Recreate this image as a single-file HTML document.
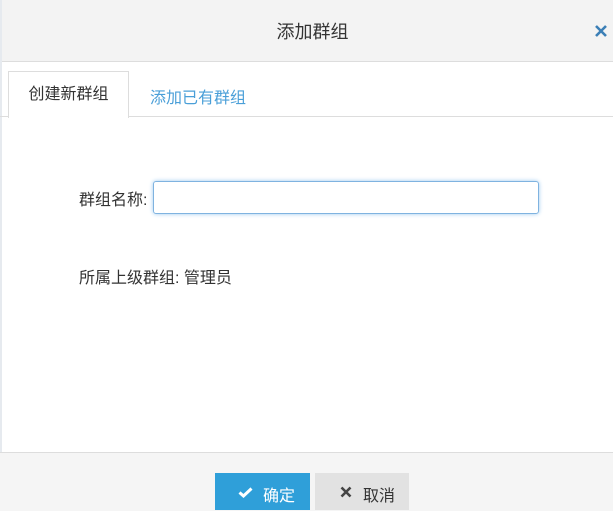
<!DOCTYPE html><html><head><meta charset="utf-8"><style>
body{margin:0;width:613px;height:510px;overflow:hidden;background:#fff;font-family:"Liberation Sans","Noto Sans CJK SC",sans-serif;position:relative;font-size:16px;color:#333}
.hd{position:absolute;left:0;top:0;width:613px;height:61px;background:#f3f3f3;border-bottom:1px solid #ddd}
.hd .t{position:absolute;left:0;right:0;top:18px;text-align:center;font-size:18px;color:#333;padding-left:12px}
.x{position:absolute;left:594px;top:24px}
.lb{position:absolute;left:0;top:0;width:2px;height:510px;background:#e6eaef}
.tabline{position:absolute;left:0;top:116px;width:613px;height:1px;background:#ddd}
.tab{position:absolute;left:8px;top:71px;width:119px;height:46px;border:1px solid #ddd;border-bottom:none;background:#fff;text-align:center;line-height:46px;font-size:16px}
.tab2{position:absolute;left:150px;top:84px;font-size:16px;color:#4a9fd8}
.l1{position:absolute;left:79px;top:186px}
.inp{position:absolute;left:153px;top:181px;width:384px;height:31px;border:1px solid #7fb3e0;border-radius:3px;box-shadow:0 0 4px #9cc8ee}
.l2{position:absolute;left:79px;top:264px}
.ft{position:absolute;left:0;top:452px;width:613px;height:58px;background:#f5f5f5;border-top:1px solid #ddd}
.b1{position:absolute;left:215px;top:473px;width:95px;height:37px;background:#2f9fd9;color:#fff;font-size:16px}
.b2{position:absolute;left:315px;top:473px;width:94px;height:37px;background:#e2e2e2;color:#333;font-size:16px}
.b1 span,.b2 span{position:absolute;top:9px}
</style></head><body>
<div class="hd"><div class="t">添加群组</div>
<svg class="x" width="14" height="14" viewBox="0 0 14 14"><path d="M2 2L12 12M12 2L2 12" stroke="#3b7fb6" stroke-width="2.6"/></svg></div>
<div class="lb"></div>
<div class="tabline"></div>
<div class="tab">创建新群组</div>
<div class="tab2">添加已有群组</div>
<div class="l1">群组名称:</div>
<div class="inp"></div>
<div class="l2">所属上级群组: 管理员</div>
<div class="ft"></div>
<div class="b1"><svg style="position:absolute;left:23px;top:14px" width="15" height="11" viewBox="0 0 15 11"><path d="M1.5 5.5L5.5 9L13.5 1.5" stroke="#fff" stroke-width="3" fill="none"/></svg><span style="left:48px">确定</span></div>
<div class="b2"><svg style="position:absolute;left:25px;top:13px" width="12" height="12" viewBox="0 0 12 12"><path d="M1.5 1.5L10.5 10.5M10.5 1.5L1.5 10.5" stroke="#444" stroke-width="2.6"/></svg><span style="left:48px">取消</span></div>
</body></html>
